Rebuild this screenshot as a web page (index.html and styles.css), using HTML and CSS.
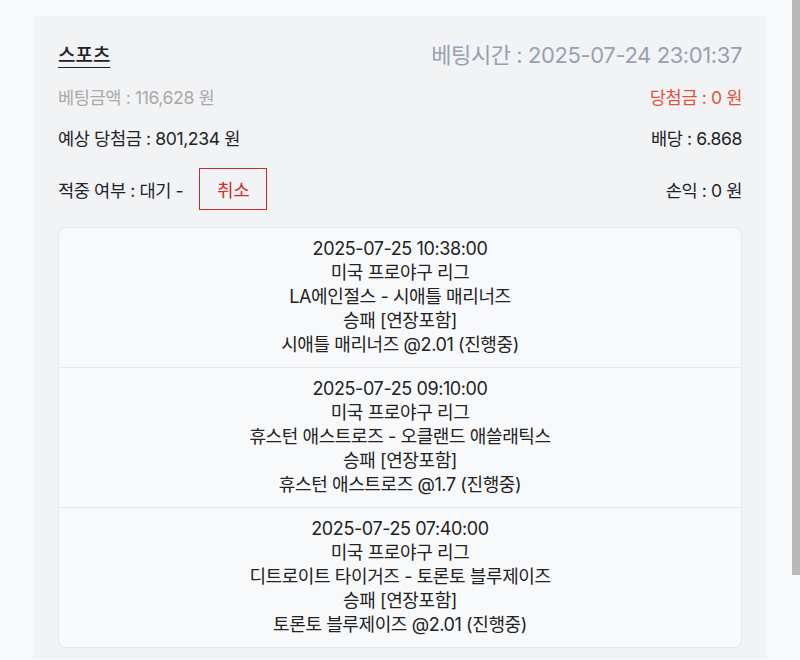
FILE: index.html
```html
<!DOCTYPE html>
<html lang="ko">
<head>
    <meta charset="UTF-8">
    <meta name="viewport" content="width=device-width, initial-scale=1.0">
    <title>베팅내역</title>
    <link rel="stylesheet" href="styles.css">
</head>
<body>

<div class="bet-panel">
    <div class="bet-row row-head">
        <span class="bet-type">스포츠</span>
        <span class="bet-time">베팅시간 : 2025-07-24 23:01:37</span>
    </div>
    <div class="bet-row row-amount">
        <span class="muted">베팅금액 : 116,628 원</span>
        <span class="win">당첨금 : 0 원</span>
    </div>
    <div class="bet-row">
        <span>예상 당첨금 : 801,234 원</span>
        <span>배당 : 6.868</span>
    </div>
    <div class="bet-row row-status">
        <div class="status">
            <span>적중 여부 : 대기 -</span>
            <button class="btn-cancel">취소</button>
        </div>
        <span>손익 : 0 원</span>
    </div>

    <div class="game-list">
        <div class="game-item">
            <div>2025-07-25 10:38:00</div>
            <div>미국 프로야구 리그</div>
            <div>LA에인절스 - 시애틀 매리너즈</div>
            <div>승패 [연장포함]</div>
            <div>시애틀 매리너즈 @2.01 (진행중)</div>
        </div>
        <div class="game-item">
            <div>2025-07-25 09:10:00</div>
            <div>미국 프로야구 리그</div>
            <div>휴스턴 애스트로즈 - 오클랜드 애쓸래틱스</div>
            <div>승패 [연장포함]</div>
            <div>휴스턴 애스트로즈 @1.7 (진행중)</div>
        </div>
        <div class="game-item">
            <div>2025-07-25 07:40:00</div>
            <div>미국 프로야구 리그</div>
            <div>디트로이트 타이거즈 - 토론토 블루제이즈</div>
            <div>승패 [연장포함]</div>
            <div>토론토 블루제이즈 @2.01 (진행중)</div>
        </div>
    </div>
</div>

<div class="scroll-thumb"></div>

</body>
</html>
```

FILE: styles.css
```css
html {
    overflow: hidden;
}
body {
    font-family: Inter, "Noto Sans CJK KR", sans-serif;
    background-color: #f8f9fa;
    color: #1f2329;
    margin: 0;
    padding: 0;
    letter-spacing: -0.4px;
}
.bet-panel {
    width: 734px;
    box-sizing: border-box;
    margin: 16px 0 0 33px;
    padding: 19px 25px 11px;
    background-color: #f2f3f5;
    font-size: 17.6px;
}
.bet-row {
    display: flex;
    justify-content: space-between;
    align-items: center;
    height: 28px;
    margin-top: 13px;
}
.row-head {
    height: 36px;
    margin-top: 0;
}
.row-amount {
    margin-top: 11px;
}
.bet-type {
    font-size: 19px;
    font-weight: 500;
    letter-spacing: 0;
    text-decoration: underline;
    text-underline-offset: 5px;
    text-decoration-thickness: 1px;
}
.bet-time {
    font-size: 22px;
    color: #97a1b0;
}
.muted {
    color: #a9a9a9;
}
.win {
    color: #e4523b;
}
.row-status {
    height: 42px;
    margin-top: 17px;
}
.status {
    display: flex;
    align-items: center;
    gap: 16px;
}
.btn-cancel {
    width: 68px;
    height: 42px;
    border: 1px solid #d22b2b;
    background-color: transparent;
    color: #d22b2b;
    font-family: inherit;
    font-size: 18px;
    letter-spacing: -0.4px;
    padding: 0;
    cursor: pointer;
}
.game-list {
    margin-top: 17px;
    background-color: #f8f9fb;
    border: 1px solid #e5e7ea;
    border-radius: 8px;
}
.game-item {
    padding: 9px 0 10px;
    text-align: center;
    font-size: 18px;
    line-height: 24px;
    color: #222;
    border-bottom: 1px solid #e8e9ec;
}
.game-item:last-child {
    border-bottom: none;
}
.scroll-thumb {
    position: fixed;
    top: 0;
    right: 0;
    width: 8px;
    height: 575px;
    background-color: #b9b9b9;
}
```
